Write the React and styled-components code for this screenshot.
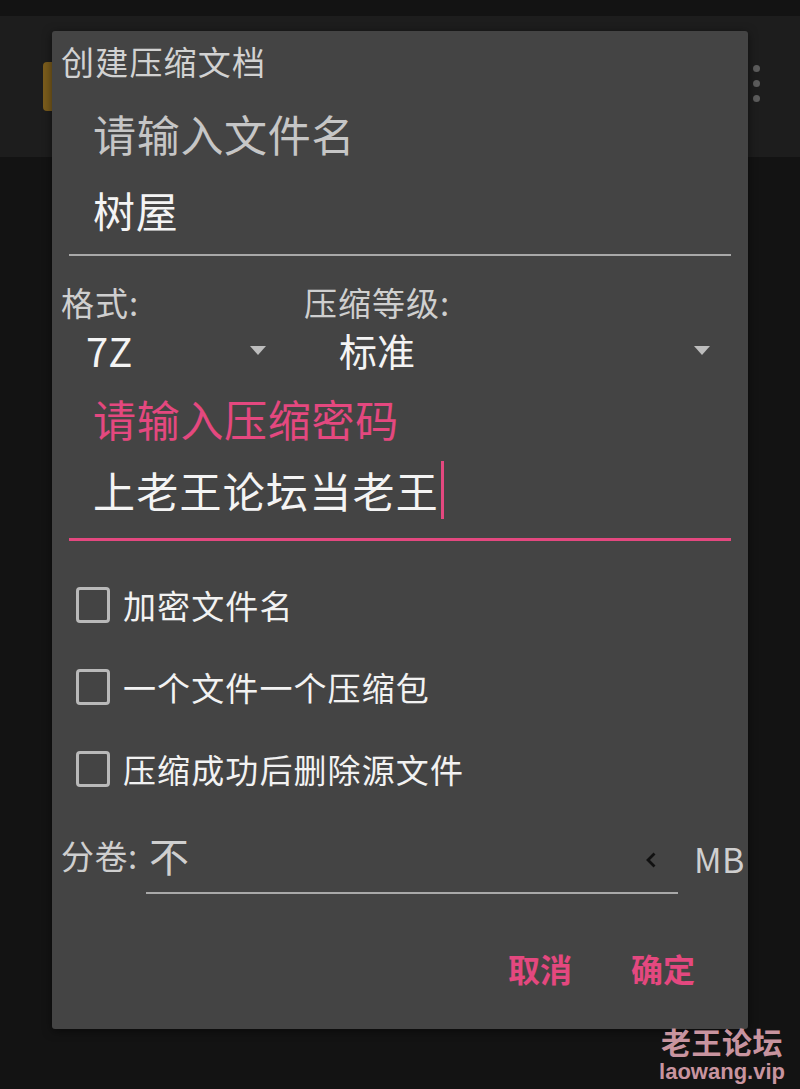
import React from "react";
import styled, { createGlobalStyle } from "styled-components";

const GlobalStyle = createGlobalStyle`
  body {
    margin: 0;
    background: #131313;
    font-family: "Noto Sans CJK SC", "Noto Sans", sans-serif;
  }
`;

const PINK = "#e4487f";

const Screen = styled.div`
  position: relative;
  width: 800px;
  height: 1089px;
  overflow: hidden;
  background: #131313;
`;

const AppBar = styled.div`
  margin-top: 16px;
  height: 141px;
  background: #1d1d1d;
  display: flex;
  align-items: center;
  justify-content: space-between;
  padding: 0 40px 0 43px;
  box-sizing: border-box;
`;

const Badge = styled.div`
  width: 40px;
  height: 49px;
  border-radius: 4px;
  background: #7a5c1c;
`;

const Dots = styled.div`
  display: flex;
  flex-direction: column;
  gap: 8px;
  margin-top: -6px;
`;

const Dot = styled.span`
  width: 7px;
  height: 7px;
  border-radius: 50%;
  background: #5c5c5c;
`;

const Dialog = styled.div`
  position: absolute;
  left: 52px;
  top: 31px;
  width: 696px;
  height: 998px;
  background: #444444;
  border-radius: 3px;
  box-shadow: 0 2px 10px rgba(0, 0, 0, 0.5);
  overflow: hidden;
`;

const Title = styled.div`
  padding: 10px 0 0 9px;
  font-size: 33px;
  line-height: 40px;
  letter-spacing: 1.2px;
  color: #d2d2d2;
`;

const Field = styled.div`
  margin: ${(p) => p.$top}px 17px 0;
`;

const FloatLabel = styled.div`
  padding-left: 24px;
  font-size: 43px;
  line-height: 50px;
  letter-spacing: 0.7px;
  color: ${(p) => (p.$active ? PINK : "#c6c6c6")};
`;

const Value = styled.div`
  margin-top: ${(p) => p.$gap}px;
  padding-left: 24px;
  height: 50px;
  font-size: 42px;
  line-height: 50px;
  letter-spacing: ${(p) => p.$spacing || 0}px;
  color: #f4f4f4;
  display: flex;
  align-items: center;
`;

const Caret = styled.span`
  display: inline-block;
  flex: none;
  width: 3px;
  height: 58px;
  margin-left: 2px;
  background: ${PINK};
`;

const Line = styled.div`
  margin-top: ${(p) => p.$gap}px;
  height: ${(p) => (p.$active ? 3 : 2)}px;
  background: ${(p) => (p.$active ? PINK : "#a9a9a9")};
`;

const OptionRow = styled.div`
  display: flex;
  margin-top: 26px;
  padding-left: 9px;
`;

const OptionCol = styled.div`
  width: ${(p) => (p.$width ? `${p.$width}px` : "auto")};
  flex: ${(p) => (p.$width ? "none" : "1")};
`;

const OptionLabel = styled.div`
  font-size: 33px;
  line-height: 40px;
  letter-spacing: 1px;
  color: #cfcfcf;
`;

const Spinner = styled.div`
  margin-top: 3px;
  height: 50px;
  display: flex;
  align-items: center;
  justify-content: space-between;
  padding: 0 38px 0 ${(p) => p.$indent}px;
`;

const SpinnerText = styled.span`
  font-size: ${(p) => p.$size}px;
  line-height: 50px;
  color: #f4f4f4;
`;

const CheckList = styled.div`
  margin-top: 23px;
`;

const CheckRow = styled.div`
  height: 82px;
  display: flex;
  align-items: center;
  gap: 13px;
  padding-left: 24px;
`;

const Box = styled.span`
  width: 34px;
  height: 36px;
  box-sizing: border-box;
  border: 3px solid #b9b9b9;
  border-radius: 4px;
`;

const CheckText = styled.span`
  font-size: 33px;
  line-height: 40px;
  letter-spacing: 1.1px;
  color: #f2f2f2;
`;

const SplitRow = styled.div`
  display: flex;
  align-items: flex-start;
  margin-top: 20px;
  padding-left: 9px;
`;

const SplitLabel = styled.div`
  width: 85px;
  font-size: 33px;
  line-height: 50px;
  letter-spacing: 0.5px;
  color: #cfcfcf;
`;

const SplitField = styled.div`
  width: 532px;
  height: 63.5px;
  box-sizing: border-box;
  padding: 0 21px 11px 3px;
  border-bottom: 2.5px solid #a9a9a9;
  display: flex;
  align-items: flex-start;
  justify-content: space-between;
`;

const SplitValue = styled.span`
  font-size: 40px;
  line-height: 50px;
  color: #cfcfcf;
`;

const ChevronWrap = styled.span`
  padding-top: 22px;
  line-height: 0;
`;

const Unit = styled.div`
  margin-left: 16px;
  padding-top: 4px;
  font-size: 34px;
  line-height: 50px;
  letter-spacing: 0.5px;
  color: #cfcfcf;
  white-space: nowrap;
`;

const Actions = styled.div`
  display: flex;
  justify-content: flex-end;
  gap: 59px;
  margin-top: 54px;
  padding-right: 53px;
`;

const ActionButton = styled.span`
  font-size: 32px;
  line-height: 40px;
  font-weight: 700;
  color: ${PINK};
`;

const Watermark = styled.div`
  position: absolute;
  right: 15px;
  bottom: 5px;
  display: flex;
  flex-direction: column;
  align-items: center;
  gap: 4px;
  color: #c8949f;
`;

const MarkTitle = styled.div`
  font-size: 30px;
  line-height: 30px;
  font-weight: 700;
  letter-spacing: 0.5px;
`;

const MarkUrl = styled.div`
  font-family: "Liberation Sans", Arial, sans-serif;
  font-size: 22px;
  line-height: 24px;
  font-weight: 700;
`;

function Triangle() {
  return (
    <svg width="16" height="9" viewBox="0 0 16 9">
      <polygon points="0,0 16,0 8,9" fill="#bdbdbd" />
    </svg>
  );
}

function Chevron() {
  return (
    <svg width="12" height="16" viewBox="0 0 12 16">
      <polyline points="9.5,1.5 3,8 9.5,14.5" fill="none" stroke="#111" strokeWidth="2.8" />
    </svg>
  );
}

const options = ["加密文件名", "一个文件一个压缩包", "压缩成功后删除源文件"];

export default function App() {
  return (
    <Screen>
      <GlobalStyle />
      <AppBar>
        <Badge />
        <Dots>
          <Dot />
          <Dot />
          <Dot />
        </Dots>
      </AppBar>

      <Dialog>
        <Title>创建压缩文档</Title>

        <Field $top={27}>
          <FloatLabel>请输入文件名</FloatLabel>
          <Value $gap={27} $spacing={0.7}>树屋</Value>
          <Line $gap={19} />
        </Field>

        <OptionRow>
          <OptionCol $width={243}>
            <OptionLabel>格式:</OptionLabel>
            <Spinner $indent={25}>
              <SpinnerText $size={40}>7Z</SpinnerText>
              <Triangle />
            </Spinner>
          </OptionCol>
          <OptionCol>
            <OptionLabel>压缩等级:</OptionLabel>
            <Spinner $indent={35}>
              <SpinnerText $size={38}>标准</SpinnerText>
              <Triangle />
            </Spinner>
          </OptionCol>
        </OptionRow>

        <Field $top={18}>
          <FloatLabel $active>请输入压缩密码</FloatLabel>
          <Value $gap={22} $spacing={1.25}>
            上老王论坛当老王
            <Caret />
          </Value>
          <Line $gap={23} $active />
        </Field>

        <CheckList>
          {options.map((text) => (
            <CheckRow key={text}>
              <Box />
              <CheckText>{text}</CheckText>
            </CheckRow>
          ))}
        </CheckList>

        <SplitRow>
          <SplitLabel>分卷:</SplitLabel>
          <SplitField>
            <SplitValue>不</SplitValue>
            <ChevronWrap>
              <Chevron />
            </ChevronWrap>
          </SplitField>
          <Unit>MB</Unit>
        </SplitRow>

        <Actions>
          <ActionButton>取消</ActionButton>
          <ActionButton>确定</ActionButton>
        </Actions>
      </Dialog>

      <Watermark>
        <MarkTitle>老王论坛</MarkTitle>
        <MarkUrl>laowang.vip</MarkUrl>
      </Watermark>
    </Screen>
  );
}
